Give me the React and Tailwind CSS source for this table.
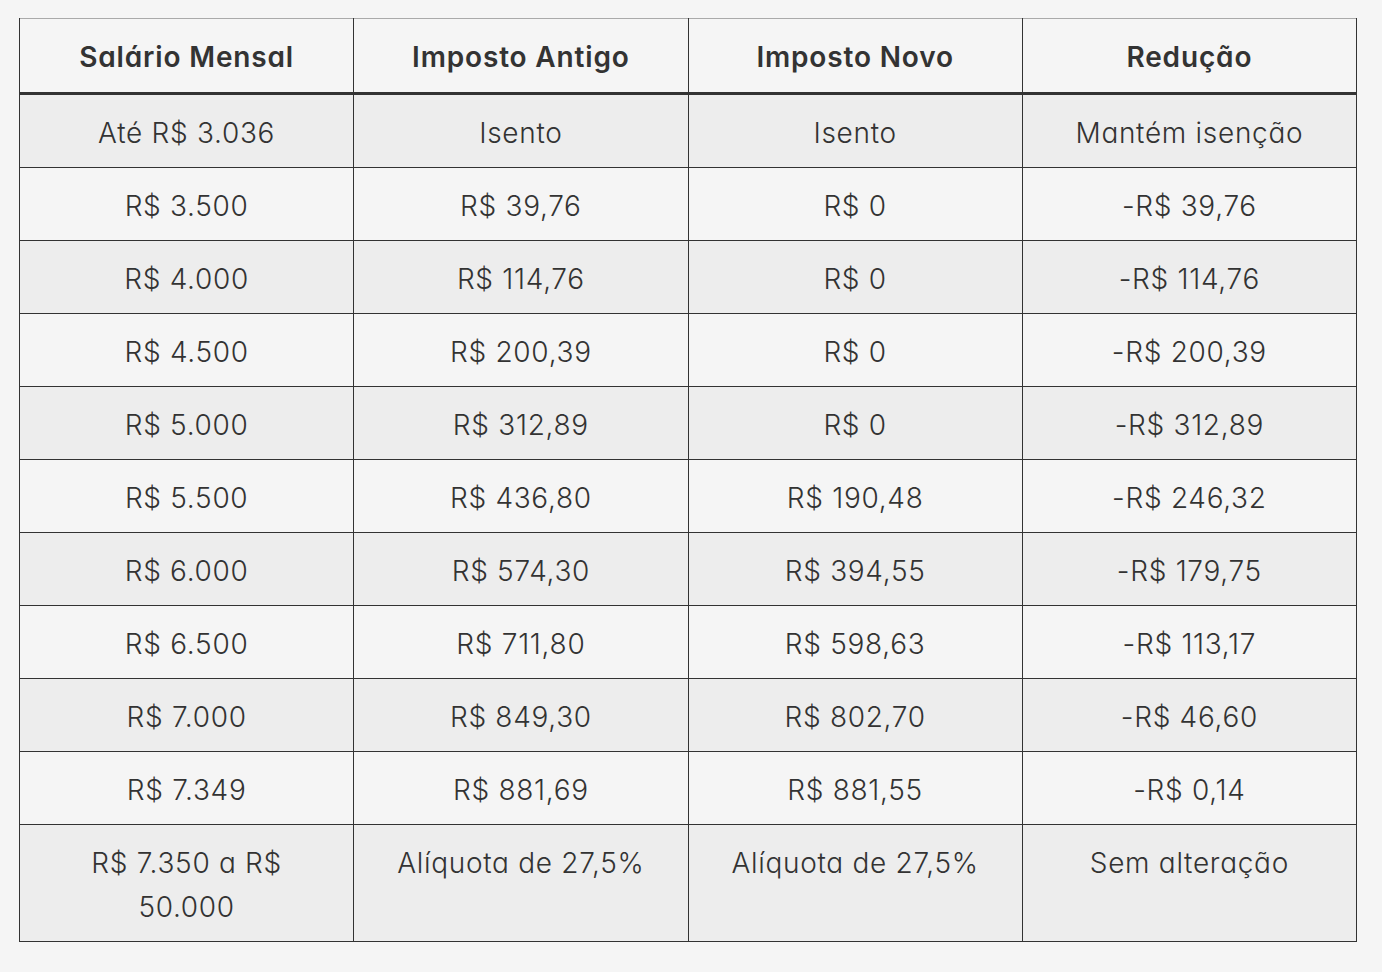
const HEAD = ["Salário Mensal", "Imposto Antigo", "Imposto Novo", "Redução"];

const ROWS = [
  ["Até R$ 3.036", "Isento", "Isento", "Mantém isenção"],
  ["R$ 3.500", "R$ 39,76", "R$ 0", "-R$ 39,76"],
  ["R$ 4.000", "R$ 114,76", "R$ 0", "-R$ 114,76"],
  ["R$ 4.500", "R$ 200,39", "R$ 0", "-R$ 200,39"],
  ["R$ 5.000", "R$ 312,89", "R$ 0", "-R$ 312,89"],
  ["R$ 5.500", "R$ 436,80", "R$ 190,48", "-R$ 246,32"],
  ["R$ 6.000", "R$ 574,30", "R$ 394,55", "-R$ 179,75"],
  ["R$ 6.500", "R$ 711,80", "R$ 598,63", "-R$ 113,17"],
  ["R$ 7.000", "R$ 849,30", "R$ 802,70", "-R$ 46,60"],
  ["R$ 7.349", "R$ 881,69", "R$ 881,55", "-R$ 0,14"],
  ["R$ 7.350 a R$ 50.000", "Alíquota de 27,5%", "Alíquota de 27,5%", "Sem alteração"],
];

export default function App() {
  return (
    <div className="min-h-screen bg-[#f5f5f5] pt-[18px] pl-[19px] font-['Inter',sans-serif] text-[#333] [font-feature-settings:'cv11']">
      <table className="w-[1338px] table-fixed border-collapse text-[28px] leading-[44px]">
        <thead>
          <tr className="border-t border-t-[#aaa]">
            {HEAD.map((h) => (
              <th
                key={h}
                className="border-x border-x-[#333] border-b-[3px] border-b-[#333] px-6 pt-[16px] pb-[13px] text-center font-semibold tracking-[0.03em]"
              >
                {h}
              </th>
            ))}
          </tr>
        </thead>
        <tbody>
          {ROWS.map((r, i) => (
            <tr key={i} className={i % 2 === 0 ? "bg-[#ededed]" : "bg-[#f5f5f5]"}>
              {r.map((c, j) => (
                <td
                  key={j}
                  className="border border-[#333] px-6 pt-[16px] pb-[12px] text-center align-top font-light tracking-[0.025em]"
                >
                  {c}
                </td>
              ))}
            </tr>
          ))}
        </tbody>
      </table>
    </div>
  );
}
